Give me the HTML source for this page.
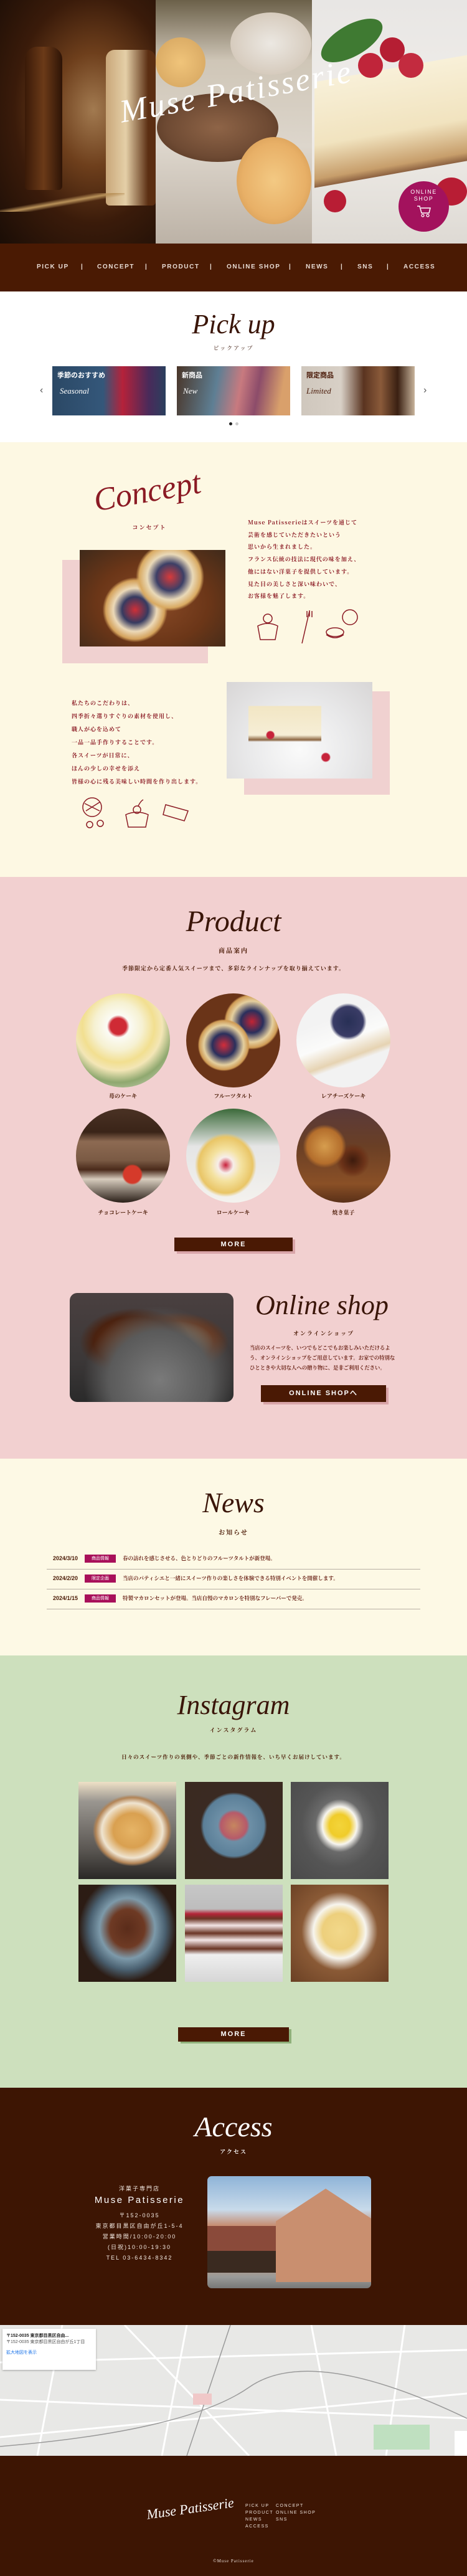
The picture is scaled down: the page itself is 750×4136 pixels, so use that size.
<!DOCTYPE html>
<html><head><meta charset="utf-8"><style>
*{margin:0;padding:0;box-sizing:border-box}
body{width:750px;height:4136px;position:relative;overflow:hidden;font-family:"Liberation Serif","Noto Serif CJK SC",serif;background:#fff}
.a{position:absolute}
.scr{font-family:"Liberation Serif",serif;font-style:italic;position:absolute;text-align:center;white-space:nowrap}
.c{position:absolute;text-align:center;white-space:nowrap}
.jp{font-family:"Liberation Sans","Noto Sans CJK JP",sans-serif}
.btn{position:absolute;background:#4a1904;color:#fff;font-family:"Liberation Sans",sans-serif;font-weight:bold;letter-spacing:2px;text-align:center;font-size:11px}
.nav span{position:absolute;top:423px;color:#e8dcd5;font-family:"Liberation Sans",sans-serif;font-size:10px;letter-spacing:1.6px;font-weight:bold}
.circ{position:absolute;width:151px;height:151px;border-radius:50%}
.lbl{position:absolute;width:151px;text-align:center;font-size:9px;color:#4a1904;font-family:"Noto Serif CJK SC",serif;font-weight:bold}
.ig{position:absolute;width:157px;height:156px}
</style></head><body>
<!-- hero -->
<div class="a" style="left:0;top:0;width:250px;height:391px;background:radial-gradient(ellipse at 60% 45%,#a27a50 0%,#6e3f1c 30%,#3a1b0a 60%,#1a0d06 100%)"></div>
<div class="a" style="left:40px;top:75px;width:60px;height:230px;background:linear-gradient(90deg,#3a1a08,#6b3a18,#2e1406);border-radius:20px 20px 6px 6px"></div>
<div class="a" style="left:170px;top:80px;width:80px;height:250px;background:linear-gradient(90deg,#c9a77a,#e4cfa7 40%,#5b2e12 85%);border-radius:14px 14px 6px 6px"></div>
<div class="a" style="left:0;top:310px;width:200px;height:30px;background:linear-gradient(170deg,transparent 40%,#b9925a 50%,transparent 60%)"></div>
<div class="a" style="left:250px;top:0;width:251px;height:391px;background:linear-gradient(180deg,#6b6049 0%,#cfc6b7 25%,#ddd6cc 60%,#bcb2a6 100%)"></div>
<div class="a" style="left:252px;top:150px;width:195px;height:110px;border-radius:50%;background:radial-gradient(ellipse,#8e6447 0%,#6e4a33 60%,#4a2e1c 100%)"></div>
<div class="a" style="left:380px;top:220px;width:120px;height:140px;border-radius:50%;background:radial-gradient(ellipse,#f3c983 0%,#e8b067 60%,#c88f4b 100%)"></div>
<div class="a" style="left:370px;top:20px;width:130px;height:100px;border-radius:50%;background:radial-gradient(ellipse,#ece8e2,#cdbfae)"></div>
<div class="a" style="left:250px;top:60px;width:80px;height:80px;border-radius:50%;background:radial-gradient(ellipse,#f0c47a,#d3a35e)"></div>
<div class="a" style="left:501px;top:0;width:249px;height:391px;background:linear-gradient(180deg,#e8e6e4 0%,#f1eeea 50%,#dedad4 100%)"></div>
<div class="a" style="left:505px;top:110px;width:245px;height:170px;background:linear-gradient(180deg,#f8f0d8 0%,#f1e3bf 60%,#c79e6b 92%,#8b6040 100%);transform:skewY(-10deg)"></div>
<div class="a" style="left:575px;top:85px;width:40px;height:40px;border-radius:50%;background:#c0253a"></div>
<div class="a" style="left:610px;top:60px;width:40px;height:40px;border-radius:50%;background:#b51e33"></div>
<div class="a" style="left:640px;top:85px;width:40px;height:40px;border-radius:50%;background:#c32b3f"></div>
<div class="a" style="left:520px;top:305px;width:36px;height:36px;border-radius:50%;background:#b81d34"></div>
<div class="a" style="left:700px;top:285px;width:50px;height:45px;border-radius:50%;background:#b81d34"></div>
<div class="a" style="left:510px;top:40px;width:110px;height:50px;border-radius:50%;background:#3f7a32;transform:rotate(-30deg)"></div>
<div class="scr" style="left:190px;top:118px;font-size:52px;color:#fff;transform:rotate(-10deg);letter-spacing:3px">Muse Patisserie</div>
<div class="a" style="left:640px;top:291px;width:81px;height:81px;border-radius:50%;background:#a3125d;color:#fff;font-family:'Liberation Sans',sans-serif;font-size:9px;letter-spacing:1.5px;text-align:center;padding-top:12px;line-height:11px">ONLINE<br>SHOP
<svg width="26" height="22" viewBox="0 0 26 22" style="display:block;margin:3px auto 0"><path d="M2 3h4l3 11h12l2-8H8" fill="none" stroke="#fff" stroke-width="1.5"/><circle cx="11" cy="18" r="2" fill="none" stroke="#fff" stroke-width="1.3"/><circle cx="19" cy="18" r="2" fill="none" stroke="#fff" stroke-width="1.3"/></svg></div>
<!-- nav -->
<div class="a nav" style="left:0;top:391px;width:750px;height:77px;background:#4a1a03"></div>
<div class="nav"><span style="left:59px">PICK UP</span><span style="left:130px">|</span><span style="left:156px">CONCEPT</span><span style="left:233px">|</span><span style="left:260px">PRODUCT</span><span style="left:337px">|</span><span style="left:364px">ONLINE SHOP</span><span style="left:464px">|</span><span style="left:491px">NEWS</span><span style="left:547px">|</span><span style="left:574px">SNS</span><span style="left:621px">|</span><span style="left:648px">ACCESS</span></div>
<!-- pick up -->
<div class="scr" style="left:0;width:750px;top:495px;font-size:44px;color:#3a1508">Pick up</div>
<div class="c" style="left:0;width:750px;top:552px;font-size:9px;color:#3a1508;letter-spacing:2px;font-family:'Noto Serif CJK SC',serif">ピックアップ</div>
<div class="a" style="left:84px;top:588px;width:182px;height:79px;background:linear-gradient(90deg,#2b4865 0%,#34577a 45%,#b5223a 62%,#4a2a5a 85%,#2a3f5e 100%)"></div>
<div class="a jp" style="left:92px;top:594px;color:#fff;font-size:11px;font-weight:bold">季節のおすすめ</div>
<div class="scr" style="left:96px;top:620px;color:#fff;font-size:13px">Seasonal</div>
<div class="a" style="left:284px;top:588px;width:182px;height:79px;background:linear-gradient(100deg,#4a3528 0%,#5e7f94 35%,#c87a7f 55%,#8c4c6a 70%,#d9a06b 90%)"></div>
<div class="a jp" style="left:292px;top:594px;color:#fff;font-size:11px;font-weight:bold">新商品</div>
<div class="scr" style="left:294px;top:620px;color:#fff;font-size:13px">New</div>
<div class="a" style="left:484px;top:588px;width:182px;height:79px;background:linear-gradient(90deg,#cfc7bd 0%,#d8d0c6 35%,#5a3420 55%,#8a5a3a 70%,#3a2012 85%,#c8b49c 100%)"></div>
<div class="a jp" style="left:492px;top:594px;color:#4a1a08;font-size:11px;font-weight:bold">限定商品</div>
<div class="scr" style="left:492px;top:620px;color:#4a1a08;font-size:13px">Limited</div>
<div class="a" style="left:64px;top:618px;font-size:16px;color:#555;font-family:'Liberation Sans'">‹</div>
<div class="a" style="left:680px;top:618px;font-size:16px;color:#555;font-family:'Liberation Sans'">›</div>
<div class="a" style="left:368px;top:678px;width:5px;height:5px;border-radius:50%;background:#222"></div>
<div class="a" style="left:378px;top:678px;width:5px;height:5px;border-radius:50%;background:#ccc"></div>
<!-- concept -->
<div class="a" style="left:0;top:710px;width:750px;height:698px;background:#fdf8e3"></div>
<div class="scr" style="left:150px;top:760px;font-size:52px;color:#8b1a24;transform:rotate(-10deg)">Concept</div>
<div class="c" style="left:190px;width:100px;top:840px;font-size:9px;color:#8b1a24;letter-spacing:2px;font-weight:bold;font-family:'Noto Serif CJK SC',serif">コンセプト</div>
<div class="a" style="left:398px;top:829px;font-size:9px;line-height:19.7px;color:#8b1a24;font-family:'Noto Serif CJK SC',serif;font-weight:bold;letter-spacing:1px">Muse Patisserieはスイーツを通じて<br>芸術を感じていただきたいという<br>思いから生まれました。<br>フランス伝統の技法に現代の味を加え、<br>他にはない洋菓子を提供しています。<br>見た目の美しさと深い味わいで、<br>お客様を魅了します。</div>
<div class="a" style="left:100px;top:899px;width:234px;height:166px;background:#f0d1d0"></div>
<div class="a" style="left:128px;top:883px;width:234px;height:155px;background:radial-gradient(circle at 62% 28%,#d83a3a 0,#3c3f66 12%,#e9d9b8 20%,#d9aa62 27%,transparent 30%),radial-gradient(circle at 38% 62%,#cf2f37 0,#363a60 12%,#ecd9b8 20%,#d4a25c 27%,transparent 30%),radial-gradient(ellipse at 50% 55%,#8a4a26 0,#6b3618 55%,#3f2a1a 100%)"></div>
<svg class="a" style="left:410px;top:975px" width="175" height="60" viewBox="0 0 175 60" fill="none" stroke="#8b1a24" stroke-width="1.5"><path d="M4 30q16-8 32 0l-4 22H8z"/><circle cx="20" cy="18" r="7"/><path d="M75 58l12-52M83 6v10M87 5v10M91 6v10"/><ellipse cx="152" cy="16" rx="12" ry="12"/><ellipse cx="128" cy="40" rx="14" ry="7"/><path d="M114 44q14 10 28 0"/></svg>
<div class="a" style="left:115px;top:1118px;font-size:9px;line-height:21px;color:#8b1a24;font-family:'Noto Serif CJK SC',serif;font-weight:bold;letter-spacing:1px">私たちのこだわりは、<br>四季折々選りすぐりの素材を使用し、<br>職人が心を込めて<br>一品一品手作りすることです。<br>各スイーツが日常に、<br>ほんの少しの幸せを添え<br>皆様の心に残る美味しい時間を作り出します。</div>
<div class="a" style="left:392px;top:1110px;width:234px;height:166px;background:#f0d1d0"></div>
<div class="a" style="left:364px;top:1095px;width:234px;height:155px;background:radial-gradient(circle at 30% 55%,#c6233a 0,#c6233a 3%,transparent 4%),radial-gradient(circle at 68% 78%,#c6233a 0,#c6233a 3%,transparent 4%),linear-gradient(180deg,transparent 25%,#f2e6c4 25%,#f6eed6 55%,#8a6440 60%,transparent 62%) 30% 0/50% 100% no-repeat,radial-gradient(ellipse at 50% 70%,#fafafa 0,#e9e9ea 50%,#d8d6d6 100%)"></div>
<svg class="a" style="left:128px;top:1280px" width="185" height="52" viewBox="0 0 185 52" fill="none" stroke="#8b1a24" stroke-width="1.5"><circle cx="20" cy="16" r="15"/><path d="M8 10l24 12M10 22l22-14"/><circle cx="16" cy="44" r="5"/><circle cx="33" cy="42" r="5"/><path d="M74 28q18-8 36 0l-4 20H78z"/><circle cx="92" cy="20" r="6"/><path d="M94 14q4-8 8-10"/><path d="M138 12l36 10-6 16-34-10z"/></svg>
<!-- product -->
<div class="a" style="left:0;top:1408px;width:750px;height:934px;background:#f2d0d0"></div>
<div class="scr" style="left:0;width:750px;top:1452px;font-size:48px;color:#3a1508">Product</div>
<div class="c" style="left:0;width:750px;top:1518px;font-size:10px;color:#4a1904;letter-spacing:2px;font-family:'Noto Serif CJK SC',serif;font-weight:bold">商品案内</div>
<div class="c" style="left:0;width:750px;top:1548px;font-size:9px;color:#4a1904;letter-spacing:1px;font-family:'Noto Serif CJK SC',serif;font-weight:bold">季節限定から定番人気スイーツまで、多彩なラインナップを取り揃えています。</div>
<div class="circ" style="left:122px;top:1595px;background:radial-gradient(circle at 45% 35%,#cf2a35 0,#cf2a35 10%,#fbfbf5 14%,#f6f1d2 30%,#f2df90 45%,#f3e6b6 55%,#8fa86f 70%,#e8e6dc 100%)"></div>
<div class="circ" style="left:299px;top:1595px;background:radial-gradient(circle at 40% 55%,#d42d3a 0,#2a2f5c 15%,#e4cf9e 26%,#cf9b55 32%,transparent 34%),radial-gradient(circle at 70% 30%,#c22434 0,#2a2f5c 12%,#e5cf9e 22%,#cf9b55 28%,transparent 30%),#6a3418"></div>
<div class="circ" style="left:476px;top:1595px;background:radial-gradient(circle at 55% 30%,#283056 0,#3a3c66 18%,transparent 22%),linear-gradient(160deg,#f3f3f3 30%,#fbfbfa 50%,#e6d3b2 65%,#f2f2f2 70%)"></div>
<div class="lbl" style="left:122px;top:1753px">苺のケーキ</div>
<div class="lbl" style="left:299px;top:1753px">フルーツタルト</div>
<div class="lbl" style="left:476px;top:1753px">レアチーズケーキ</div>
<div class="circ" style="left:122px;top:1780px;background:radial-gradient(circle at 60% 70%,#d53a2a 0,#d53a2a 10%,transparent 12%),linear-gradient(180deg,#4a3224 0%,#3a2418 25%,#8d6a52 35%,#7a5a44 55%,#4a2a1a 65%,#d7ccbd 75%,#2a1f18 100%)"></div>
<div class="circ" style="left:299px;top:1780px;background:radial-gradient(ellipse at 42% 60%,#c8203b 0,#f7eeea 10%,#f4e2a0 20%,#e9c566 35%,transparent 40%),linear-gradient(180deg,#3c6a3a 0,#e5e5e5 40%,#f4f2ee 100%)"></div>
<div class="circ" style="left:476px;top:1780px;background:radial-gradient(circle at 30% 40%,#d69d4e 0,#b46e2c 20%,transparent 25%),radial-gradient(circle at 60% 55%,#3d1b0d 0,#6b3218 15%,transparent 22%),linear-gradient(180deg,#5a3a3a 0,#6a3f25 40%,#8a5026 80%,#5a3018 100%)"></div>
<div class="lbl" style="left:122px;top:1940px">チョコレートケーキ</div>
<div class="lbl" style="left:299px;top:1940px">ロールケーキ</div>
<div class="lbl" style="left:476px;top:1940px">焼き菓子</div>
<div class="a" style="left:284px;top:1990px;width:190px;height:23px;background:#d9a5a9"></div>
<div class="btn" style="left:280px;top:1987px;width:190px;height:22px;line-height:22px">MORE</div>
<!-- online shop -->
<div class="a" style="left:112px;top:2076px;width:263px;height:175px;border-radius:12px;background:radial-gradient(ellipse at 55% 80%,#7a7a7a 0,#5a5a5a 40%,transparent 60%),radial-gradient(ellipse at 40% 45%,#7a3e1c 0,#4a2210 30%,transparent 40%),radial-gradient(ellipse at 65% 45%,#d9b27a 0,#6a3418 25%,transparent 35%),linear-gradient(180deg,#4a4040,#3c3838 60%,#2a2a2a)"></div>
<div class="scr" style="left:410px;top:2070px;font-size:44px;color:#3a1508">Online shop</div>
<div class="c" style="left:410px;width:220px;top:2134px;font-size:9px;color:#4a1904;letter-spacing:2px;font-family:'Noto Serif CJK SC',serif;font-weight:bold">オンラインショップ</div>
<div class="a" style="left:401px;top:2156px;width:240px;font-size:8.4px;line-height:16px;color:#6b2418;font-family:'Noto Serif CJK SC',serif;font-weight:bold">当店のスイーツを、いつでもどこでもお楽しみいただけるよう、オンラインショップをご用意しています。お家での特別なひとときや大切な人への贈り物に、是非ご利用ください。</div>
<div class="a" style="left:423px;top:2228px;width:201px;height:27px;background:#d9a5a9"></div>
<div class="btn" style="left:419px;top:2224px;width:201px;height:27px;line-height:27px">ONLINE SHOPへ</div>
<!-- news -->
<div class="a" style="left:0;top:2342px;width:750px;height:316px;background:#fdf9e5"></div>
<div class="scr" style="left:0;width:750px;top:2386px;font-size:46px;color:#3a1508">News</div>
<div class="c" style="left:0;width:750px;top:2452px;font-size:10px;color:#4a1904;letter-spacing:2px;font-family:'Noto Serif CJK SC',serif;font-weight:bold">お知らせ</div>
<div class="a" style="left:75px;top:2519px;width:600px;height:1px;background:#b8b0a4"></div>
<div class="a" style="left:75px;top:2551px;width:600px;height:1px;background:#b8b0a4"></div>
<div class="a" style="left:75px;top:2583px;width:600px;height:1px;background:#b8b0a4"></div>
<div class="a jp" style="left:85px;top:2497px;font-size:9px;color:#4a1904;font-weight:bold">2024/3/10</div>
<div class="a jp" style="left:85px;top:2529px;font-size:9px;color:#4a1904;font-weight:bold">2024/2/20</div>
<div class="a jp" style="left:85px;top:2561px;font-size:9px;color:#4a1904;font-weight:bold">2024/1/15</div>
<div class="a jp" style="left:136px;top:2496px;width:50px;height:13px;background:#a8105a;color:#fff;font-size:7px;text-align:center;line-height:13px">商品情報</div>
<div class="a jp" style="left:136px;top:2528px;width:50px;height:13px;background:#a8105a;color:#fff;font-size:7px;text-align:center;line-height:13px">限定企画</div>
<div class="a jp" style="left:136px;top:2560px;width:50px;height:13px;background:#a8105a;color:#fff;font-size:7px;text-align:center;line-height:13px">商品情報</div>
<div class="a" style="left:197px;top:2496px;font-size:8.5px;color:#6b2418;font-family:'Noto Serif CJK SC',serif;font-weight:bold">春の訪れを感じさせる、色とりどりのフルーツタルトが新登場。</div>
<div class="a" style="left:197px;top:2528px;font-size:8.5px;color:#6b2418;font-family:'Noto Serif CJK SC',serif;font-weight:bold">当店のパティシエと一緒にスイーツ作りの楽しさを体験できる特別イベントを開催します。</div>
<div class="a" style="left:197px;top:2560px;font-size:8.5px;color:#6b2418;font-family:'Noto Serif CJK SC',serif;font-weight:bold">特製マカロンセットが登場。当店自慢のマカロンを特別なフレーバーで発売。</div>
<!-- instagram -->
<div class="a" style="left:0;top:2658px;width:750px;height:694px;background:#cde0bd"></div>
<div class="scr" style="left:0;width:750px;top:2712px;font-size:44px;color:#3a1508">Instagram</div>
<div class="c" style="left:0;width:750px;top:2771px;font-size:9px;color:#4a1904;letter-spacing:2px;font-family:'Noto Serif CJK SC',serif;font-weight:bold">インスタグラム</div>
<div class="c" style="left:0;width:750px;top:2815px;font-size:8.5px;color:#4a1904;letter-spacing:1px;font-family:'Noto Serif CJK SC',serif;font-weight:bold">日々のスイーツ作りの裏側や、季節ごとの新作情報を、いち早くお届けしています。</div>
<div class="ig" style="left:126px;top:2861px;background:radial-gradient(ellipse at 55% 50%,#e6b466 0,#d9a050 25%,#efe4d0 40%,#b28456 48%,transparent 52%),linear-gradient(180deg,#eee0c6 0,#9a9690 20%,#5a5652 70%,#2a2826 100%)"></div>
<div class="ig" style="left:297px;top:2861px;background:radial-gradient(circle at 50% 45%,#c6865f 0,#b65a6a 18%,#6d8fa6 22%,#5b7f98 42%,#3a2a22 46%,#3a2a20 100%)"></div>
<div class="ig" style="left:467px;top:2861px;background:radial-gradient(ellipse at 50% 45%,#f3d43a 0,#f0cc2a 15%,#f7f5ef 25%,#6a6a6a 35%,#555 55%,#4a4a4a 100%)"></div>
<div class="ig" style="left:126px;top:3026px;background:radial-gradient(ellipse at 50% 45%,#5a2c1a 0,#6e3a24 25%,#7d9aaa 40%,#4a6070 55%,#2c1c14 70%)"></div>
<div class="ig" style="left:297px;top:3026px;background:linear-gradient(180deg,#c7c7c7 0,#bdbdbd 25%,#b42438 30%,#6a3424 35%,#f3e6e6 42%,#6a3424 50%,#f3e6e6 57%,#6a3424 66%,#efefef 72%,#d6d6d6 100%)"></div>
<div class="ig" style="left:467px;top:3026px;background:radial-gradient(ellipse at 50% 48%,#f2d88a 0,#edcf7c 25%,#f7f5ee 38%,#8a5a36 55%,#6a4024 100%)"></div>
<div class="a" style="left:290px;top:3258px;width:178px;height:23px;background:#8fb07a"></div>
<div class="btn" style="left:286px;top:3255px;width:178px;height:23px;line-height:23px">MORE</div>
<!-- access -->
<div class="a" style="left:0;top:3352px;width:750px;height:784px;background:#3d1503"></div>
<div class="scr" style="left:0;width:750px;top:3388px;font-size:46px;color:#fff">Access</div>
<div class="c" style="left:0;width:750px;top:3448px;font-size:9px;color:#fff;letter-spacing:2px;font-family:'Noto Serif CJK SC',serif;font-weight:bold">アクセス</div>
<div class="c jp" style="left:124px;width:200px;top:3507px;font-size:9px;color:#f2e8e0;letter-spacing:2px">洋菓子専門店</div>
<div class="c jp" style="left:124px;width:200px;top:3524px;font-size:15px;color:#fff;letter-spacing:2.5px">Muse Patisserie</div>
<div class="c jp" style="left:124px;width:200px;top:3549px;font-size:9px;color:#f2e8e0;letter-spacing:2px;line-height:17px">〒152-0035<br>東京都目黒区自由が丘1-5-4<br>営業時間/10:00-20:00<br>(日祝)10:00-19:30<br>TEL 03-6434-8342</div>
<div class="a" style="left:333px;top:3494px;width:263px;height:180px;border-radius:7px;overflow:hidden;background:linear-gradient(180deg,#8fb4d8 0,#c8daea 30%,#c6886a 45%,#d39a78 70%,#9a9a98 90%,#777 100%)">
<div class="a" style="left:110px;top:20px;width:160px;height:150px;background:#c98f6f;clip-path:polygon(50% 0,100% 35%,100% 100%,0 100%,0 35%)"></div>
<div class="a" style="left:0;top:80px;width:110px;height:70px;background:#8a4a3a"></div>
<div class="a" style="left:0;top:120px;width:110px;height:35px;background:#3a2a20"></div></div>
<!-- map -->
<div class="a" style="left:0;top:3733px;width:750px;height:210px;background:#e8e8e6;overflow:hidden">
<svg width="750" height="210" style="position:absolute;left:0;top:0"><g stroke="#fff" stroke-width="3" fill="none"><path d="M0 60L750 40M0 120L750 150M100 0L60 210M300 0L260 210M500 0L540 210M650 0L620 210M0 180L750 110M200 0L400 210"/></g><g stroke="#9a9a9a" stroke-width="1.5" fill="none"><path d="M0 195Q300 170 400 100T750 150"/><path d="M370 0L300 210"/></g><rect x="600" y="160" width="90" height="40" fill="#bfe0c0"/><rect x="310" y="110" width="30" height="18" fill="#f0c8c8"/></svg>
<div class="a jp" style="left:4px;top:6px;width:150px;height:66px;background:#fff;font-size:7px;color:#222;padding:6px 6px;box-shadow:0 1px 3px rgba(0,0,0,.3)"><b>〒152-0035 東京都目黒区自由...</b><br><span style="color:#555">〒152-0035 東京都目黒区自由が丘1丁目</span><br><br><span style="color:#1a73e8">拡大地図を表示</span></div>
<div class="a" style="left:730px;top:170px;width:20px;height:40px;background:#fff"></div>
</div>
<!-- footer -->
<div class="scr" style="left:235px;top:4015px;font-size:22px;color:#fff;transform:rotate(-8deg)">Muse Patisserie</div>
<div class="a jp" style="left:394px;top:4018px;font-size:7px;line-height:11px;color:#e8dcd5;letter-spacing:1.5px">PICK UP<br>PRODUCT<br>NEWS<br>ACCESS</div>
<div class="a jp" style="left:443px;top:4018px;font-size:7px;line-height:11px;color:#e8dcd5;letter-spacing:1.5px">CONCEPT<br>ONLINE SHOP<br>SNS</div>
<div class="c" style="left:0;width:750px;top:4108px;font-size:7px;color:#e8dcd5;letter-spacing:1px">©Muse Patisserie</div>
</body></html>
